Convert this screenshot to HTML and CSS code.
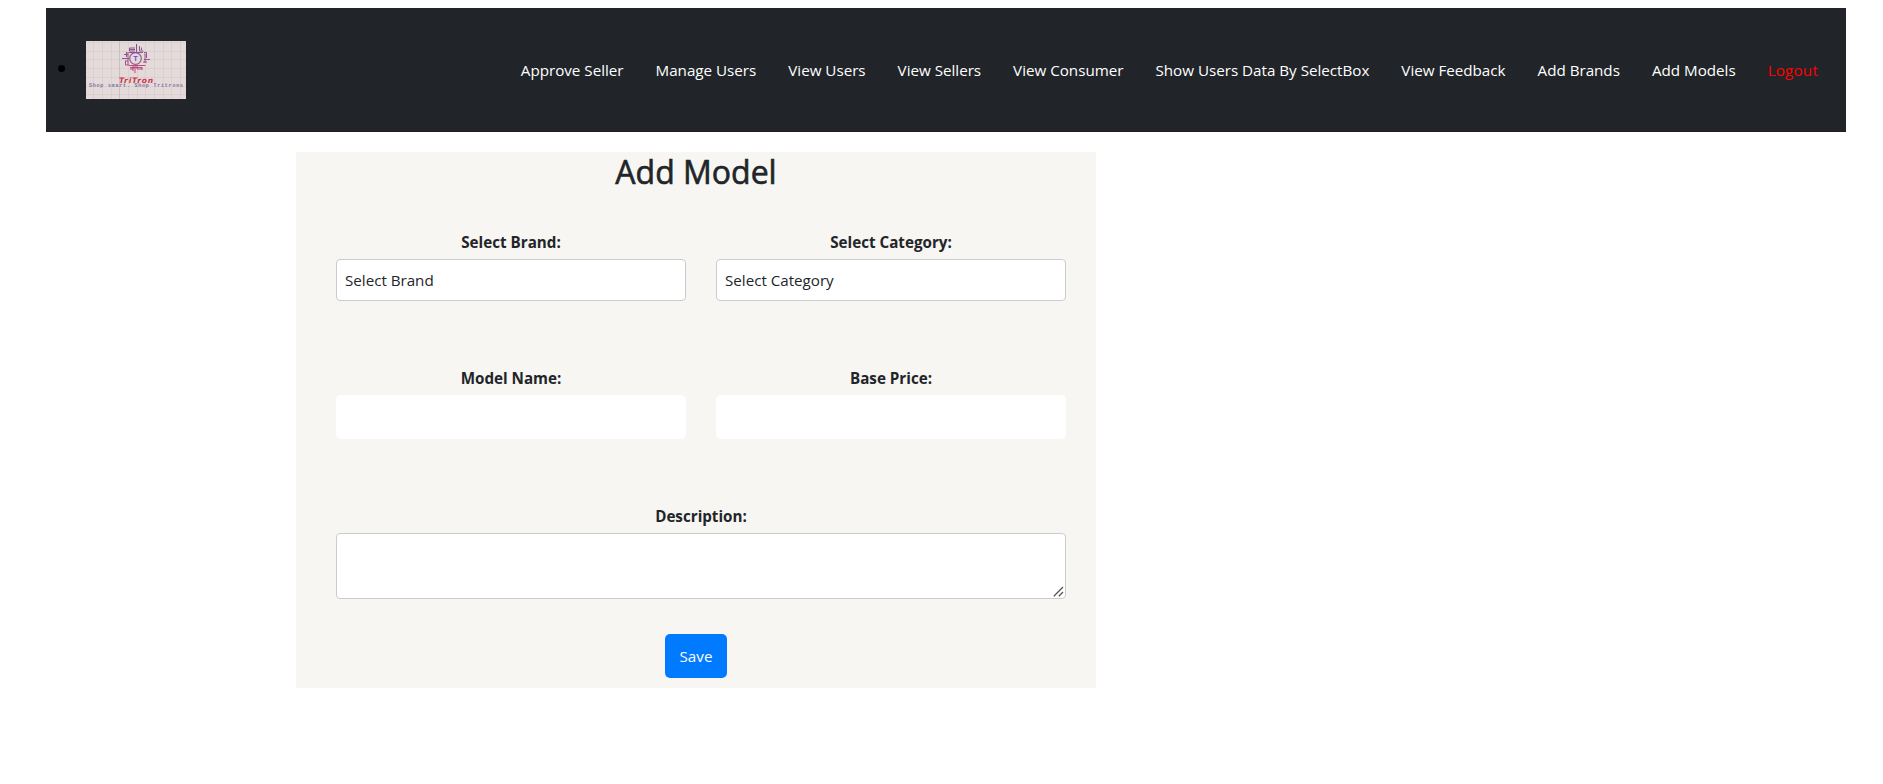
FILE: index.html
```html
<!DOCTYPE html>
<html lang="en">
<head>
<meta charset="utf-8">
<title>Add Model</title>
<link rel="stylesheet" href="styles.css">
</head>
<body>
<nav class="navbar">
  <span class="bullet"></span>
  <svg class="logo" viewBox="0 0 100 58" role="img" aria-label="TriTron">
    <defs>
      <linearGradient id="emblem" gradientUnits="userSpaceOnUse" x1="50" y1="3" x2="50" y2="32">
        <stop offset="0" stop-color="#85528f"/>
        <stop offset=".55" stop-color="#9b568d"/>
        <stop offset="1" stop-color="#cb4774"/>
      </linearGradient>
    </defs>
    <rect width="100" height="58" fill="#e4dada"/>
    <path class="grid" d="M7.500 0V58M16.500 0V58M25.500 0V58M42.500 0V58M51.500 0V58M59.500 0V58M68.500 0V58M77.500 0V58M85.500 0V58M94.500 0V58M0 1.500H100M0 10.500H100M0 18.500H100M0 27.500H100M0 36.500H100M0 45.500H100M0 53.500H100"/>
    <path class="grid-major" d="M33.500 0V58"/>
    <g fill="none" stroke="url(#emblem)" stroke-width="1">
      <path d="M50.500 3V11M53.500 5V10H57.500M55.500 6.500V9M49 7H43.500V10H49M44 8.500H49M43 11.500H57M58 11.500H60.500V17M58.500 13H59V22M58 18.500H64M57 21H61M57 24.500H59.500M42 11V24M40.500 11V16M38 13.500H42M36 17.500H43M39 20H42M39.500 20V24H43M43 24.500H57M44 26.500H56M44 28H47V25M49 25V32M51 25V28H56M47 27V30M56 26V29"/>
      <circle cx="49.500" cy="17.500" r="5.800" fill="#e4dada" stroke-width="1.200"/>
    </g>
    <text class="logo-t" x="49.500" y="20.200" text-anchor="middle">T</text>
    <text class="logo-name" x="33" y="41.500" textLength="34">TriTron</text>
    <text class="logo-tag" x="3" y="46.300" textLength="94">Shop smart. Shop Tritrons</text>
  </svg>
  <div class="links">
    <a>Approve Seller</a><a>Manage Users</a><a>View Users</a><a>View Sellers</a><a>View Consumer</a><a>Show Users Data By SelectBox</a><a>View Feedback</a><a>Add Brands</a><a>Add Models</a><a class="logout">Logout</a>
  </div>
</nav>
<form class="card">
  <h2 class="title">Add Model</h2>
  <div class="fields">
    <div class="field"><label class="label">Select Brand:</label><div class="select">Select Brand</div></div>
    <div class="field"><label class="label">Select Category:</label><div class="select">Select Category</div></div>
    <div class="field"><label class="label">Model Name:</label><input class="input" type="text"></div>
    <div class="field"><label class="label">Base Price:</label><input class="input" type="text"></div>
    <div class="field wide">
      <label class="label">Description:</label>
      <textarea class="area"></textarea>
      <svg class="grip" viewBox="0 0 11 11"><path d="M.8 10.200L10 1M5.800 10.200L10 6"/></svg>
    </div>
  </div>
  <button class="save" type="button">Save</button>
</form>
</body>
</html>
```
FILE: styles.css
```css
* { box-sizing: border-box; }
body {
  margin: 0;
  padding: 8px 37px 0 46px;
  background: #fff;
  color: #212529;
  font: 15.2px/24px "Open Sans", "Noto Sans", sans-serif;
}
.navbar {
  display: flex;
  align-items: center;
  height: 124px;
  padding: 0 28px 0 12px;
  background: #212529;
  border-bottom: 1px solid #241b22;
}
.bullet {
  width: 7px;
  height: 7px;
  margin: 0 21px 2px 0;
  border-radius: 50%;
  background: #000;
}
.logo { width: 100px; height: 58px; }
.grid { stroke: #d5cbcd; stroke-width: .7; fill: none; }
.grid-major { stroke: #c9bfc2; stroke-width: 1; }
.logo-t { font: bold 7.500px "Liberation Sans", sans-serif; fill: #5b55dc; }
.logo-name { font: italic bold 7.500px "DejaVu Sans", sans-serif; fill: #cf3548; }
.logo-tag { font: bold 5px "Liberation Mono", monospace; fill: #83729a; }
.links {
  display: flex;
  gap: 32px;
  margin-left: auto;
  color: #fff;
  white-space: nowrap;
}
.links a { letter-spacing: -.01px; }
.links .logout { color: #f00; letter-spacing: .2px; }
.card {
  display: flex;
  flex-direction: column;
  align-items: center;
  width: 800px;
  height: 536px;
  margin: 20px 0 0 250px;
  background: #f7f6f2;
}
.title {
  margin: 0;
  padding-top: 1px;
  font-size: 32px;
  line-height: 37px;
  font-weight: 500;
  -webkit-text-stroke: .6px #212529;
}
.fields {
  display: grid;
  grid-template-columns: 350px 350px;
  grid-template-rows: 136px 138px 112px;
  column-gap: 30px;
  margin: 40px 0 0 10px;
}
.field { display: flex; flex-direction: column; position: relative; }
.wide { grid-column: 1 / 3; }
.label { height: 29px; font-weight: 700; font-size: 15.200px; text-align: center; }
.select, .area { border: 1px solid #ccc; border-radius: 4px; background: #fff; }
.select { height: 42px; padding: 8px; letter-spacing: -.02px; }
.input { height: 44px; border: 0; border-radius: 5px; background: #fff; }
.area { height: 66px; resize: none; }
.grip {
  position: absolute;
  right: 2px;
  top: 82px;
  width: 11px;
  height: 11px;
  fill: none;
  stroke: #555;
  stroke-width: 1.300;
}
.save {
  width: 62px;
  height: 44px;
  margin-top: 18px;
  padding: 0;
  border: 0;
  border-radius: 5px;
  background: #007bff;
  color: #fff;
  font: inherit;
}
```
